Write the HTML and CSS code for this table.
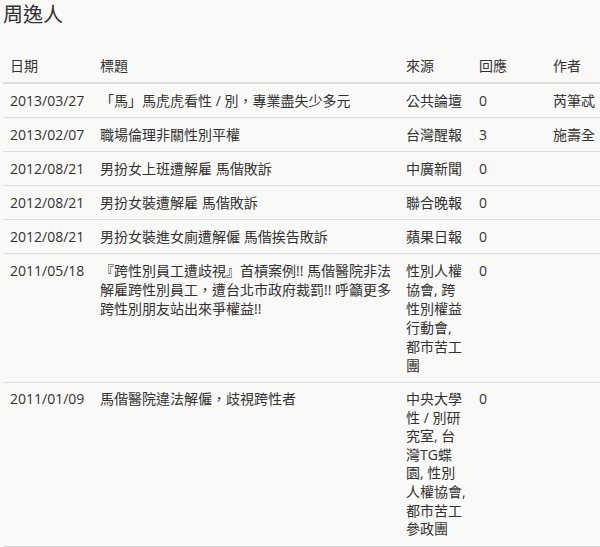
FILE: index.html
```html
<!DOCTYPE html>
<html lang="zh-Hant">
<head>
<meta charset="utf-8">
<title>周逸人</title>
<link rel="stylesheet" href="styles.css">
</head>
<body>
<div class="page">
  <h2 class="name">周逸人</h2>
  <table class="articles">
    <colgroup>
      <col class="c-date">
      <col class="c-title">
      <col class="c-source">
      <col class="c-reply">
      <col class="c-author">
    </colgroup>
    <thead>
      <tr>
        <th>日期</th>
        <th>標題</th>
        <th class="source">來源</th>
        <th>回應</th>
        <th>作者</th>
      </tr>
    </thead>
    <tbody>
      <tr>
        <td>2013/03/27</td>
        <td>「馬」馬虎虎看性 / 別，專業盡失少多元</td>
        <td class="source">公共論壇</td>
        <td>0</td>
        <td>芮筆忒</td>
      </tr>
      <tr>
        <td>2013/02/07</td>
        <td>職場倫理非關性別平權</td>
        <td class="source">台灣醒報</td>
        <td>3</td>
        <td>施壽全</td>
      </tr>
      <tr>
        <td>2012/08/21</td>
        <td>男扮女上班遭解雇 馬偕敗訴</td>
        <td class="source">中廣新聞</td>
        <td>0</td>
        <td></td>
      </tr>
      <tr>
        <td>2012/08/21</td>
        <td>男扮女裝遭解雇 馬偕敗訴</td>
        <td class="source">聯合晚報</td>
        <td>0</td>
        <td></td>
      </tr>
      <tr>
        <td>2012/08/21</td>
        <td>男扮女裝進女廁遭解僱 馬偕挨告敗訴</td>
        <td class="source">蘋果日報</td>
        <td>0</td>
        <td></td>
      </tr>
      <tr>
        <td>2011/05/18</td>
        <td>『跨性別員工遭歧視』首槓案例!! 馬偕醫院非法解雇跨性別員工，遭台北市政府裁罰!! 呼籲更多跨性別朋友站出來爭權益!!</td>
        <td class="source">性別人權協會, 跨性別權益行動會, 都市苦工團</td>
        <td>0</td>
        <td></td>
      </tr>
      <tr class="tall">
        <td>2011/01/09</td>
        <td>馬偕醫院違法解僱，歧視跨性者</td>
        <td class="source">中央大學性 / 別研究室, 台灣TG蝶園, 性別人權協會, 都市苦工參政團</td>
        <td>0</td>
        <td></td>
      </tr>
    </tbody>
  </table>
</div>
</body>
</html>
```

FILE: styles.css
```css
html, body {
  margin: 0;
  padding: 0;
  background: #f9f9f7;
  overflow: hidden;
}

body {
  font-family: "Open Sans", "Noto Sans CJK TC", sans-serif;
  font-size: 14px;
  color: #333;
}

.page {
  padding: 1px 0 0 3px;
}

.name {
  margin: 0 0 20px 0;
  font-size: 20px;
  line-height: 28px;
  font-weight: normal;
  color: #333;
}

.articles {
  width: 620px;
  table-layout: fixed;
  border-collapse: collapse;
}

.c-date { width: 90px; }
.c-title { width: 306px; }
.c-source { width: 73px; }
.c-reply { width: 74px; }
.c-author { width: 77px; }

.articles th,
.articles td {
  padding: 7px;
  line-height: 19px;
  text-align: left;
  vertical-align: top;
  font-weight: normal;
}

.articles .source {
  padding-right: 5px;
}

.articles .tall td {
  line-height: 18.6px;
}

.articles thead th {
  border-bottom: 2px solid #dcdcdc;
}

.articles tbody td {
  border-top: 1px solid #dedede;
}

.articles tbody tr:first-child td {
  border-top: none;
}

.articles tbody tr:last-child td {
  border-bottom: 2px solid #d6d6d6;
}

.articles td:last-child {
  white-space: nowrap;
}
```
